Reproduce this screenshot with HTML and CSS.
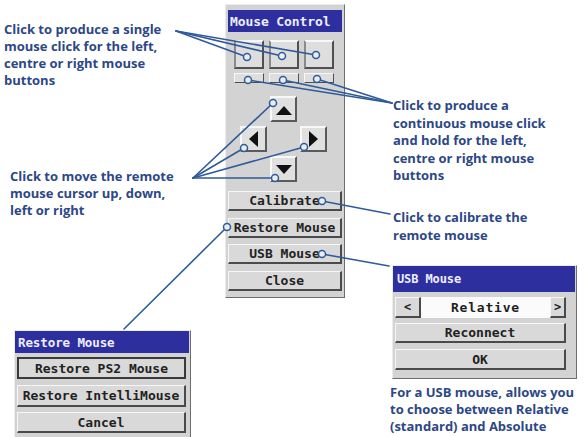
FILE: index.html
```html
<!DOCTYPE html>
<html>
<head>
<meta charset="utf-8">
<link rel="stylesheet" href="styles.css">
</head>
<body>
<div class="canvas">
  <p class="note n1">Click to produce a single<br>mouse click for the left,<br>centre or right mouse<br>buttons</p>
  <p class="note n2">Click to move the remote<br>mouse cursor up, down,<br>left or right</p>
  <p class="note n3">Click to produce a<br>continuous mouse click<br>and hold for the left,<br>centre or right mouse<br>buttons</p>
  <p class="note n4">Click to calibrate the<br>remote mouse</p>
  <p class="note n5">For a USB mouse, allows you<br>to choose between Relative<br>(standard) and Absolute</p>

  <div class="panel main">
    <div class="title">Mouse Control</div>
    <div class="clicks">
      <div class="sq"></div><div class="sq"></div><div class="sq"></div>
    </div>
    <div class="holds">
      <div class="hb"></div><div class="hb"></div><div class="hb"></div>
    </div>
    <div class="arrows">
      <div class="ar up"><span class="tri t-up"></span></div>
      <div class="ar left"><span class="tri t-left"></span></div>
      <div class="ar right"><span class="tri t-right"></span></div>
      <div class="ar down"><span class="tri t-down"></span></div>
    </div>
    <div class="stack">
      <div class="btn">Calibrate</div>
      <div class="btn">Restore Mouse</div>
      <div class="btn">USB Mouse</div>
      <div class="btn">Close</div>
    </div>
  </div>

  <div class="panel usb">
    <div class="title t2">USB Mouse</div>
    <div class="sel">
      <div class="btn nav">&lt;</div>
      <div class="field">Relative</div>
      <div class="btn nav narrow">&gt;</div>
    </div>
    <div class="stack2">
      <div class="btn b20">Reconnect</div>
      <div class="btn b21">OK</div>
    </div>
  </div>

  <div class="panel restore">
    <div class="title t3">Restore Mouse</div>
    <div class="stack3">
      <div class="btn b22 focus">Restore PS2 Mouse</div>
      <div class="btn b22">Restore IntelliMouse</div>
      <div class="btn b21">Cancel</div>
    </div>
  </div>

  <svg class="wires" width="587" height="437" viewBox="0 0 587 437">
    <g class="ln">
      <line x1="176" y1="31" x2="247" y2="57"/>
      <line x1="176" y1="31" x2="282" y2="56"/>
      <line x1="176" y1="31" x2="316" y2="55"/>
      <line x1="392" y1="103" x2="248" y2="80"/>
      <line x1="392" y1="103" x2="283" y2="80"/>
      <line x1="392" y1="103" x2="317" y2="79"/>
      <line x1="193" y1="178" x2="273" y2="103"/>
      <line x1="193" y1="178" x2="244" y2="148"/>
      <line x1="193" y1="178" x2="304" y2="147"/>
      <line x1="193" y1="178" x2="275" y2="178"/>
      <line x1="322" y1="201" x2="390" y2="214"/>
      <line x1="227" y1="227" x2="124" y2="329"/>
      <line x1="322" y1="254" x2="389" y2="266"/>
    </g>
    <g class="dot">
      <circle cx="247" cy="57" r="3.5"/>
      <circle cx="282" cy="56" r="3.5"/>
      <circle cx="316" cy="55" r="3.5"/>
      <circle cx="248" cy="80" r="3.5"/>
      <circle cx="283" cy="80" r="3.5"/>
      <circle cx="317" cy="79" r="3.5"/>
      <circle cx="273" cy="103" r="3.5"/>
      <circle cx="244" cy="148" r="3.5"/>
      <circle cx="304" cy="147" r="3.5"/>
      <circle cx="275" cy="178" r="3.5"/>
      <circle cx="322" cy="201" r="3.5"/>
      <circle cx="227" cy="227" r="3.5"/>
      <circle cx="322" cy="254" r="3.5"/>
    </g>
  </svg>
</div>
</body>
</html>
```

FILE: styles.css
```css
html, body {
  margin: 0;
  padding: 0;
  background: #ffffff;
}
.canvas {
  position: relative;
  width: 587px;
  height: 437px;
  overflow: hidden;
  background: #ffffff;
}
.note {
  position: absolute;
  margin: 0;
  font-family: "Open Sans", "Noto Sans", sans-serif;
  font-weight: 700;
  font-size: 13px;
  line-height: 17px;
  color: #2c4787;
  white-space: nowrap;
}
.n1 { left: 4px; top: 21px; }
.n2 { left: 10px; top: 168px; }
.n3 { left: 393px; top: 97px; line-height: 17.5px; }
.n4 { left: 393px; top: 208px; line-height: 18px; }
.n5 { left: 390px; top: 384px; }

.panel {
  position: absolute;
  box-sizing: border-box;
  background: #d3d3d3;
  border: 1px solid;
  border-color: #ececec #6e6e6e #6e6e6e #ececec;
  font-family: "DejaVu Sans Mono", "Liberation Mono", monospace;
  font-weight: 700;
  font-size: 13px;
  color: #1e1e1e;
}
.main {
  left: 225px;
  top: 4px;
  width: 120px;
  height: 294px;
  padding: 5px 2px 0 2px;
}
.title {
  height: 22px;
  background: #2d2f9f;
  color: #eeeeff;
  display: flex;
  align-items: center;
  padding-left: 2px;
  letter-spacing: -0.1px;
}
.clicks {
  display: flex;
  gap: 5px;
  margin: 8px 0 0 6px;
}
.sq {
  box-sizing: border-box;
  width: 30px;
  height: 29px;
  background: #dedede;
  border: 2px solid;
  border-color: #f7f7f7 #505050 #505050 #8a8a8a;
}
.holds {
  display: flex;
  gap: 5px;
  margin: 4px 0 0 6px;
}
.hb {
  box-sizing: border-box;
  width: 30px;
  height: 10px;
  background: #dedede;
  border: 1px solid;
  border-color: #f7f7f7 #505050 #505050 #f7f7f7;
}
.arrows {
  display: grid;
  grid-template-columns: 27px 27px 27px;
  grid-template-rows: 26px 26px 26px;
  column-gap: 3px;
  row-gap: 4px;
  margin: 13px 0 0 12px;
}
.ar {
  box-sizing: border-box;
  background: #e0e0e0;
  border: 2px solid;
  border-color: #f8f8f8 #5a5a5a #5a5a5a #f8f8f8;
  display: flex;
  align-items: center;
  justify-content: center;
}
.up { grid-column: 2; grid-row: 1; }
.left { grid-column: 1; grid-row: 2; }
.right { grid-column: 3; grid-row: 2; }
.down { grid-column: 2; grid-row: 3; }
.tri {
  width: 0;
  height: 0;
  border-style: solid;
}
.t-up {
  border-width: 0 8px 9px 8px;
  border-color: transparent transparent #111 transparent;
  margin-top: 2px;
}
.t-down {
  border-width: 9px 8px 0 8px;
  border-color: #111 transparent transparent transparent;
}
.t-left {
  border-width: 8px 9px 8px 0;
  border-color: transparent #111 transparent transparent;
}
.t-right {
  border-width: 8px 0 8px 9px;
  border-color: transparent transparent transparent #111;
}
.stack {
  display: flex;
  flex-direction: column;
  gap: 6.5px;
  margin-top: 9px;
}
.btn {
  box-sizing: border-box;
  height: 20px;
  background: #d9d9d9;
  border: 1px solid;
  border-bottom-width: 2px;
  border-right-width: 2px;
  border-color: #f6f6f6 #4a4a4a #4a4a4a #f6f6f6;
  display: flex;
  align-items: center;
  justify-content: center;
  white-space: nowrap;
  color: #222;
}

.usb {
  left: 392px;
  top: 265px;
  width: 185px;
  height: 114px;
  padding: 0 10px 0 2px;
}
.t2 {
  height: 26px;
  margin: 0 -9px 0 -2px;
  padding-left: 4px;
  font-size: 12px;
}
.sel {
  display: flex;
  margin-top: 5px;
  height: 21px;
}
.nav {
  width: 26px;
  height: 21px;
  font-size: 12px;
}
.narrow { width: 16px; }
.field {
  flex: 1;
  background: #fbfbfb;
  display: flex;
  align-items: center;
  justify-content: center;
  letter-spacing: 0.8px;
}
.stack2 {
  display: flex;
  flex-direction: column;
  gap: 6px;
  margin-top: 5px;
}
.b20 { height: 20px; }
.b21 { height: 21px; }
.b22 { height: 22px; }

.restore {
  left: 14px;
  top: 330px;
  width: 177px;
  height: 108px;
  padding: 0 4px 0 2px;
}
.t3 {
  margin: 0 -3px 0 -2px;
  padding-left: 3px;
  font-size: 12.5px;
}
.stack3 {
  display: flex;
  flex-direction: column;
  gap: 5.5px;
  margin-top: 4px;
}
.focus {
  border-color: #3a3a3a #3a3a3a #3a3a3a #3a3a3a;
  border-width: 2px;
}

.wires {
  position: absolute;
  left: 0;
  top: 0;
  pointer-events: none;
}
.ln line {
  stroke: #2f5b98;
  stroke-width: 1.6;
  stroke-linecap: round;
}
.dot circle {
  fill: #e9eef6;
  stroke: #2f5b98;
  stroke-width: 1.5;
}
```
